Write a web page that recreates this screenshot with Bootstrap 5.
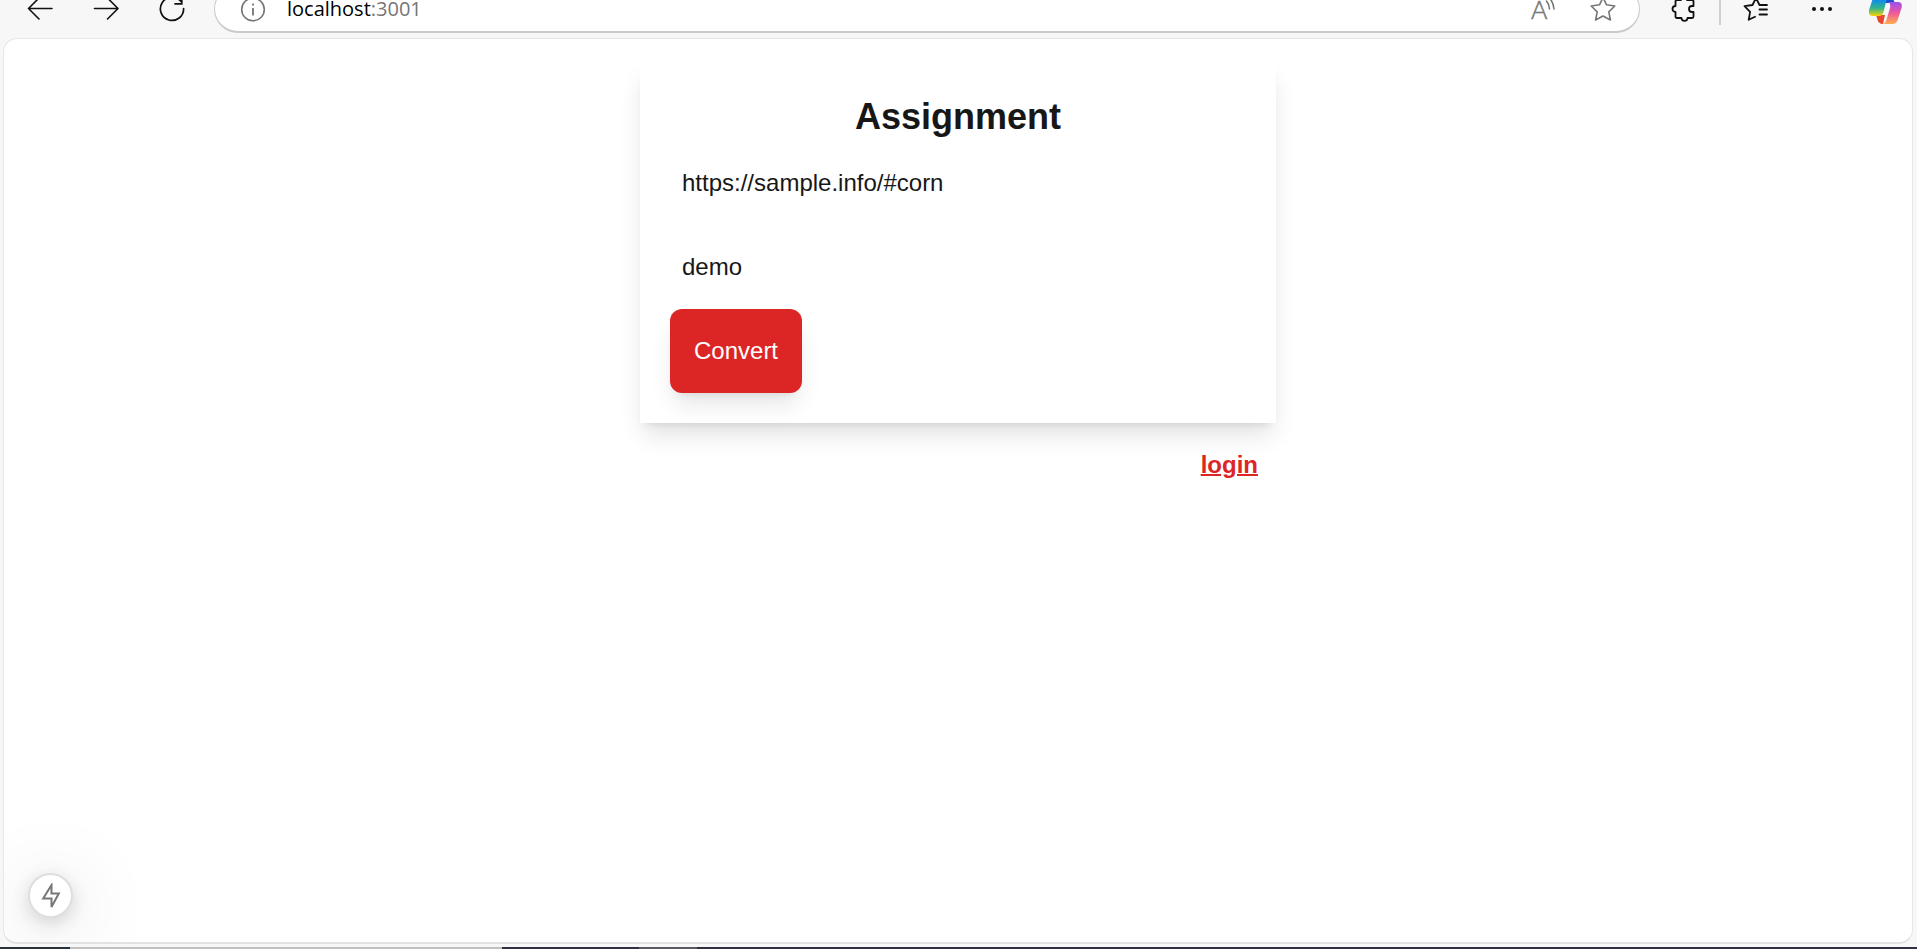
<!DOCTYPE html>
<html lang="en">
<head>
<meta charset="utf-8">
<meta name="viewport" content="width=device-width, initial-scale=1">
<title>Assignment</title>
<link href="https://cdn.jsdelivr.net/npm/bootstrap@5.3.0/dist/css/bootstrap.min.css" rel="stylesheet">
<script src="https://cdn.jsdelivr.net/npm/bootstrap@5.3.0/dist/js/bootstrap.bundle.min.js" defer></script>
<style>
  body { background: #f7f7f7; color: #171717; font-family: "Liberation Sans", Arial, sans-serif; font-size: 24px; line-height: 36px; }
  .toolbar { height: 38px; padding: 0 0 5px 7px; }
  .tool { width: 66px; height: 48px; flex: none; border: 0; background: none; padding: 0; color: #111; }
  .tool-last { width: 60px; margin-right: 2px; }
  .address { height: 48px; border: 1px solid #c9c9c9; border-bottom-width: 2px; border-radius: 24px; margin: 0 11px 0 9px; padding: 0 6px 0 8px; background: #fff; color: #767676; }
  .address .tool { width: 60px; color: #767676; }
  .url { font-family: "Open Sans", "Noto Sans", sans-serif; font-size: 20px; line-height: 16px; margin-left: 4px; }
  .url b { color: #000; font-weight: 400; }
  .divider { width: 2px; height: 28px; background: #cfcfcf; margin: 0 2px; }
  .viewport { margin: 0 4px 3px 3px; border: 1px solid #e6e6e6; border-bottom: 2px solid #e2e2e2; border-radius: 14px; background: #fff; padding-top: 24px; }
  .panel { padding: 30px; background: #fff; box-shadow: 0 15px 24px -4px rgba(0,0,0,.12), 0 6px 9px -6px rgba(0,0,0,.12); }
  .panel h1 { font-size: 36px; line-height: 48px; font-weight: 700; }
  .field { height: 84px; padding: 0 12px; border: 0; background: transparent; color: inherit; font-size: 24px; outline: 0; }
  .convert { height: 84px; padding: 0 24px; border: 0; border-radius: 12px; background: #dc2626; color: #fff; font-size: 24px; box-shadow: 0 15px 24px -4px rgba(0,0,0,.1), 0 6px 9px -6px rgba(0,0,0,.1); }
  .login { color: #dc2626; padding: 24px 18px 0; text-decoration-thickness: 2px; }
  .login:hover { color: #b91c1c; }
  .flash { left: 24px; bottom: 24px; width: 45px; height: 45px; border: 2px solid #dedede; background: #fff; color: #777; padding: 0; box-shadow: 0 5px 18px rgba(0,0,0,.15), 0 14px 80px 10px rgba(0,0,0,.1); }
  .strip { height: 2px; background: #2f3040; }
  .strip i:nth-child(1) { width: 70px; background: #26313a; }
  .strip i:nth-child(2) { width: 432px; background: #bfc0bf; }
  .strip i:nth-child(3) { width: 58px; margin-left: 137px; background: #595b62; }
</style>
</head>
<body class="d-flex flex-column vh-100 overflow-hidden">
  <header class="toolbar d-flex align-items-end overflow-hidden flex-shrink-0">
    <button class="tool d-flex align-items-center justify-content-center" aria-label="Back"><svg width="26" height="26" viewBox="0 0 26 26" fill="none" stroke="currentColor" stroke-width="1.6" stroke-linecap="round" stroke-linejoin="round"><path d="M25 12.500H1.500M12 2 1.500 12.500 12 23"/></svg></button>
    <button class="tool d-flex align-items-center justify-content-center" aria-label="Forward"><svg width="26" height="26" viewBox="0 0 26 26" fill="none" stroke="currentColor" stroke-width="1.6" stroke-linecap="round" stroke-linejoin="round"><path d="M1.500 12.500H25M14.500 2 25 12.500 14.500 23"/></svg></button>
    <button class="tool d-flex align-items-center justify-content-center" aria-label="Reload"><svg width="26" height="26" viewBox="0 0 26 26" fill="none" stroke="currentColor" stroke-width="1.7" stroke-linecap="round"><path d="M24.600 12.500A11.600 11.600 0 1 1 22 5.500M22.800 .5v7.300H16"/></svg></button>
    <div class="address d-flex align-items-center flex-grow-1">
      <button class="tool d-flex align-items-center justify-content-center" aria-label="Site information"><svg width="26" height="26" viewBox="0 0 26 26" fill="none" stroke="currentColor" stroke-width="1.6"><circle cx="13" cy="13.500" r="11.300"/><path d="M13 12v7.500M13 7.500v2" stroke-width="1.8"/></svg></button>
      <span class="url flex-grow-1"><b>localhost</b>:3001</span>
      <button class="tool d-flex align-items-center justify-content-center" aria-label="Read aloud"><svg width="26" height="26" viewBox="0 0 26 26" fill="none" stroke="currentColor" stroke-width="1.6" stroke-linecap="round"><text x="1" y="23" font-family="Lato, sans-serif" font-weight="300" font-size="25" fill="currentColor" stroke-width=".5">A</text><path d="M16.500 5q3 3.500 3 8M19.500 2q4 4.500 4.500 11"/></svg></button>
      <button class="tool d-flex align-items-center justify-content-center" aria-label="Add to favorites"><svg width="26" height="26" viewBox="0 0 26 26" fill="none" stroke="currentColor" stroke-width="1.6" stroke-linejoin="round"><path d="m13 1.500 3.500 7.300 8.300 1.200-6 5.800 1.600 8.200L13 20l-7.400 4 1.600-8.200-6-5.800 8.300-1.200Z"/></svg></button>
    </div>
    <button class="tool d-flex align-items-center justify-content-center" aria-label="Extensions"><svg width="26" height="26" viewBox="0 0 26 26" fill="none" stroke="currentColor" stroke-width="1.8" stroke-linejoin="round"><path d="M6 4h4a3 3 0 0 1 6 0h5q1.500 0 1.500 1.500V10H21a2.800 2.800 0 0 0 0 6h1.500v4.500q0 1.500-1.500 1.500h-4.500a3 2.800 0 0 1-6 0H6q-1.500 0-1.500-1.500V16a3 3 0 0 1 0-6V5.500Q4.500 4 6 4Z"/></svg></button>
    <div class="divider align-self-end mb-2 flex-shrink-0"></div>
    <button class="tool d-flex align-items-center justify-content-center" aria-label="Favorites"><svg width="26" height="26" viewBox="0 0 26 26" fill="none" stroke="currentColor" stroke-width="1.8" stroke-linecap="round" stroke-linejoin="round"><path d="M16.500 9 13 2 9.500 9 1.500 10.200l5.600 5.600-1.400 8L12 20.800M16.500 9H24M16.500 13.500H24M16.500 18.500H24"/></svg></button>
    <button class="tool d-flex align-items-center justify-content-center" aria-label="Settings and more"><svg width="26" height="26" viewBox="0 0 26 26" fill="currentColor"><circle cx="5" cy="13" r="2"/><circle cx="13" cy="13" r="2"/><circle cx="21" cy="13" r="2"/></svg></button>
    <button class="tool tool-last d-flex align-items-center justify-content-center" aria-label="Copilot"><svg width="34" height="32" viewBox="0 0 34 32">
      <defs>
        <linearGradient id="cool" x1="0" y1="0" x2="0" y2="1"><stop offset=".3" stop-color="#128ee4"/><stop offset=".65" stop-color="#35b58a"/><stop offset="1" stop-color="#fbd100"/></linearGradient>
        <linearGradient id="warm" x1="0" y1="0" x2="0" y2="1"><stop offset="0" stop-color="#9b4ff0"/><stop offset=".5" stop-color="#f0589a"/><stop offset="1" stop-color="#ffad4e"/></linearGradient>
      </defs>
      <path d="M14 2h9l4 8H15Z" fill="#1b51cc"/>
      <path d="M8 22h9l-2 9q-5 0-6-6Z" fill="#e9482f"/>
      <path d="M9 1h11l-4 16q-1 6-5 6H5q-5 0-4-6L5 5q1-4 4-4Z" fill="url(#cool)"/>
      <path d="M22 9h8q5 0 3.500 6L30 26q-1 5-6 5h-9q3-1 4-6l3-10q1-5-2-6Z" fill="url(#warm)"/>
    </svg></button>
  </header>

  <main class="viewport flex-grow-1 position-relative overflow-hidden">
    <div class="row g-0 justify-content-center">
      <div class="col-4">
        <form class="panel" onsubmit="return false">
          <h1 class="text-center mb-0">Assignment</h1>
          <input class="field d-block w-100" type="text" aria-label="URL" value="https://sample.info/#corn">
          <input class="field d-block w-100" type="text" aria-label="Name" value="demo">
          <button class="convert d-block" type="submit">Convert</button>
        </form>
        <div class="d-flex justify-content-end"><a class="login fw-bold" href="#login">login</a></div>
      </div>
    </div>
    <button class="flash position-absolute rounded-circle d-flex align-items-center justify-content-center" aria-label="Developer tools"><svg width="20" height="26" viewBox="0 0 20 26" fill="none" stroke="currentColor" stroke-width="2"><path d="M10.500 2v8.500h7.300L10.500 24v-8.500H2.200Z"/></svg></button>
  </main>
  <footer class="strip d-flex flex-shrink-0" aria-hidden="true"><i></i><i></i><i></i></footer>
</body>
</html>
